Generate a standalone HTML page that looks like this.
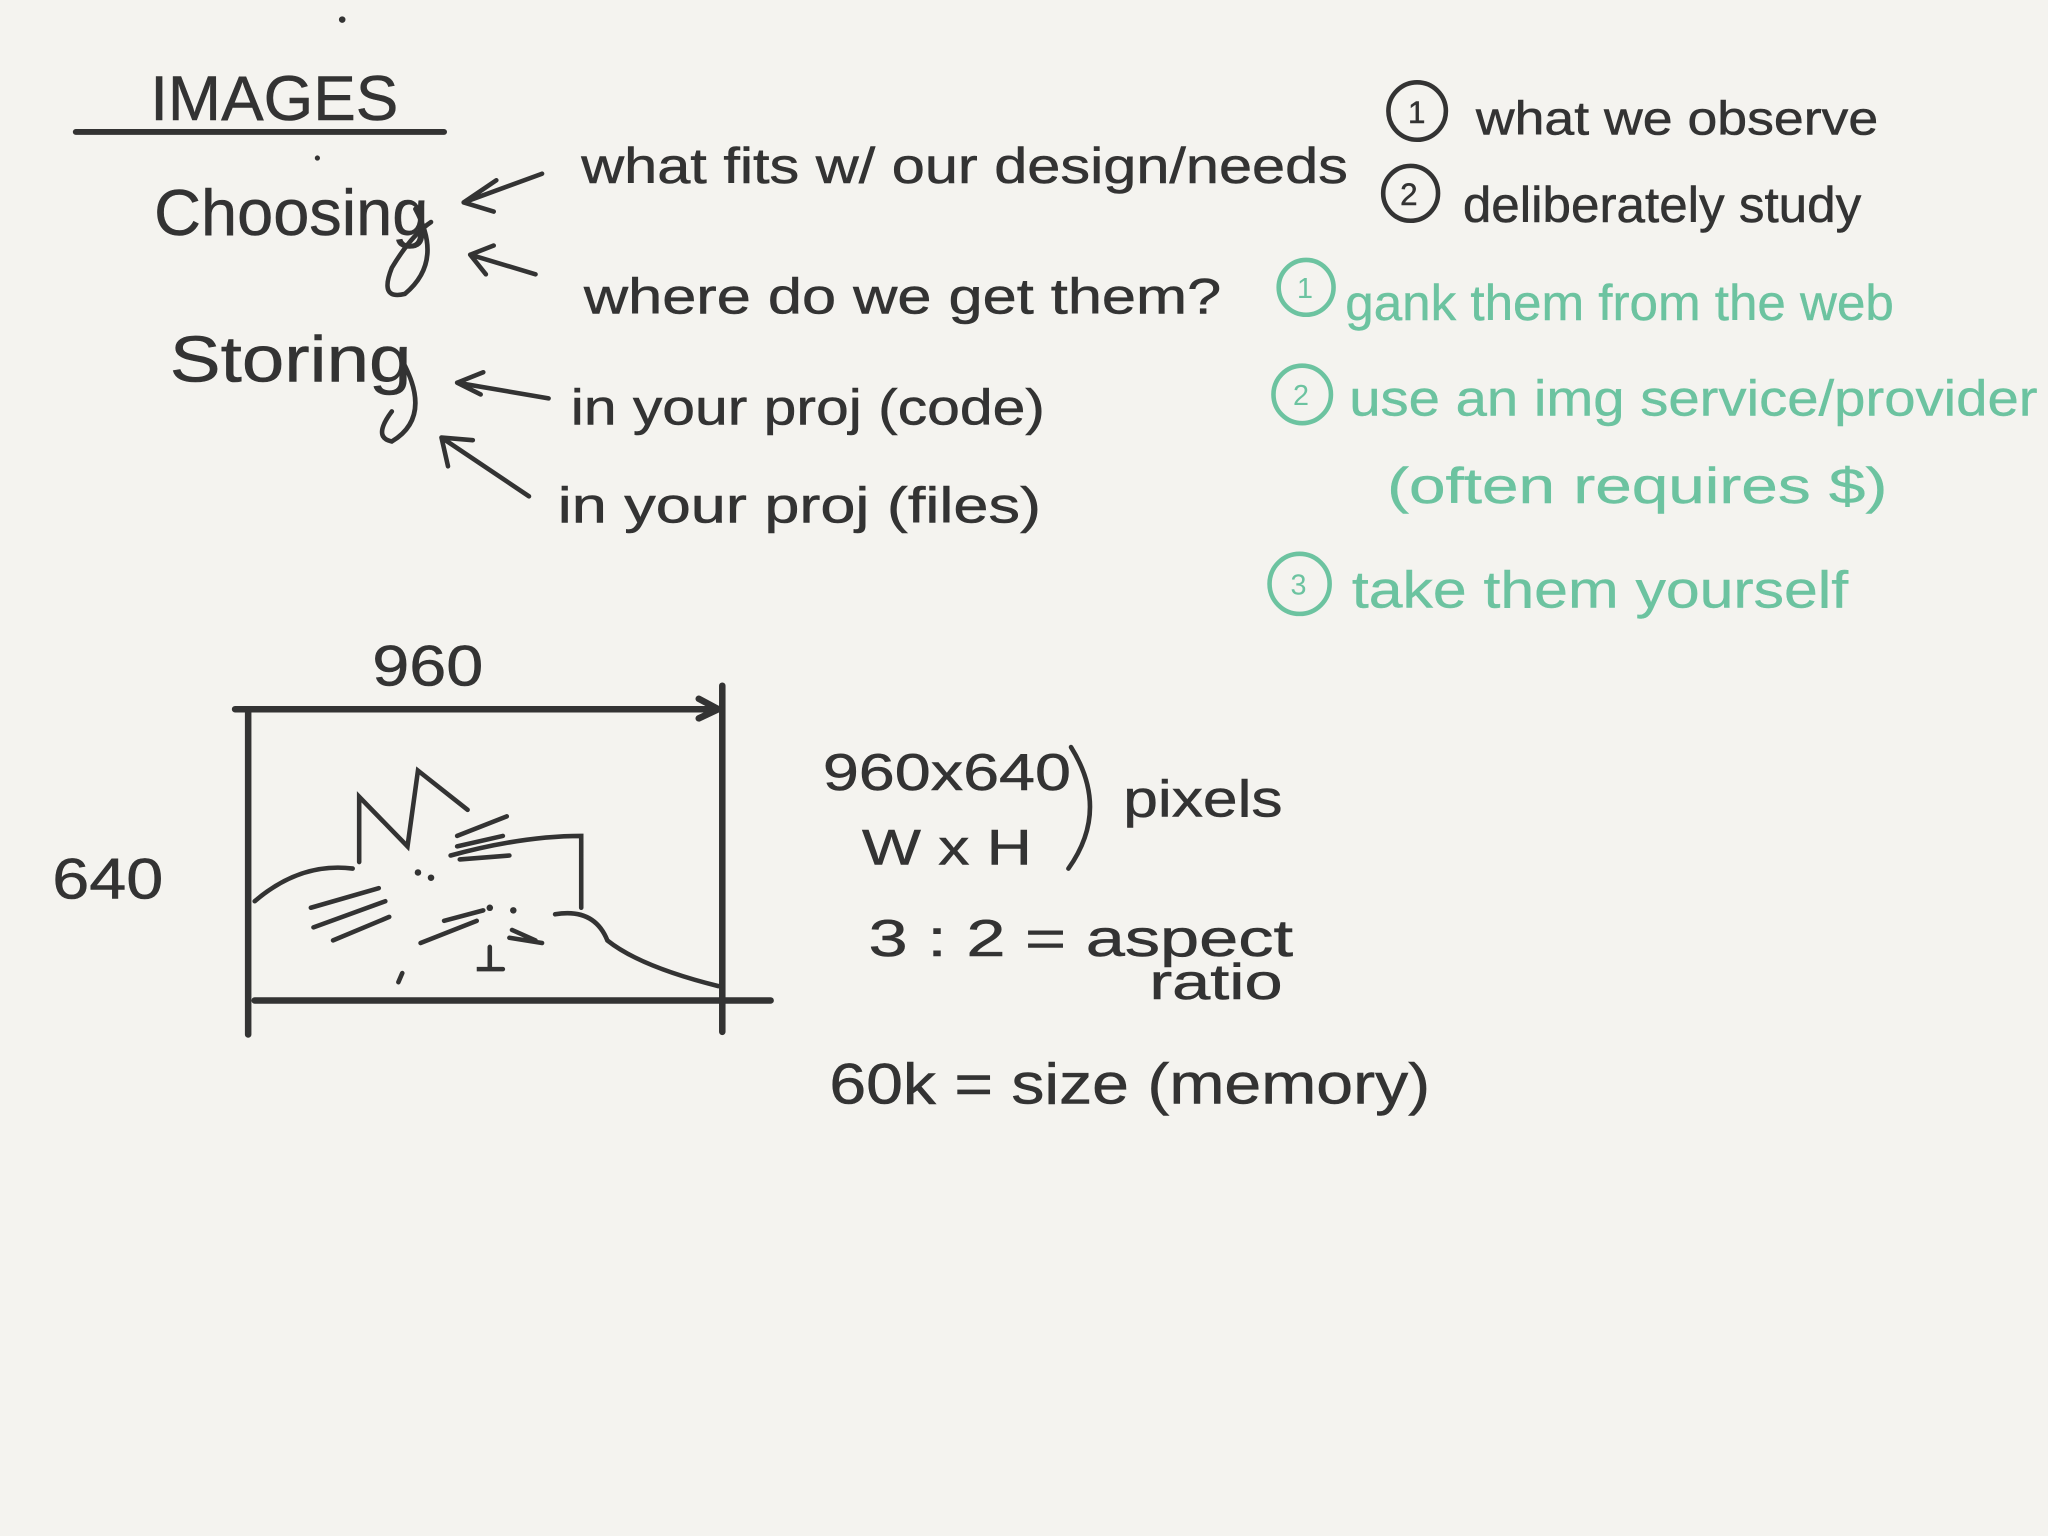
<!DOCTYPE html>
<html><head><meta charset="utf-8"><style>
html,body{margin:0;padding:0;background:#f4f3ef;}
svg{display:block}
text{font-family:"Liberation Sans",sans-serif;}
</style></head><body>
<svg width="2048" height="1536" viewBox="0 0 1568 1176" xmlns="http://www.w3.org/2000/svg">
<rect width="1568" height="1176" fill="#f4f3ef"/>
<g fill="#333" stroke="#333" stroke-width="0.4">
<text x="115" y="92" font-size="48" textLength="190" lengthAdjust="spacingAndGlyphs">IMAGES</text>
<text x="118" y="180" font-size="50" textLength="210" lengthAdjust="spacingAndGlyphs">Choosing</text>
<text x="130" y="292" font-size="50" textLength="185" lengthAdjust="spacingAndGlyphs">Storing</text>
<text x="445" y="140" font-size="38" textLength="587" lengthAdjust="spacingAndGlyphs">what fits w/ our design/needs</text>
<text x="447" y="240" font-size="38" textLength="488" lengthAdjust="spacingAndGlyphs">where do we get them?</text>
<text x="437" y="325" font-size="38" textLength="363" lengthAdjust="spacingAndGlyphs">in your proj (code)</text>
<text x="427" y="400" font-size="38" textLength="370" lengthAdjust="spacingAndGlyphs">in your proj (files)</text>
<text x="1130" y="103" font-size="36" textLength="308" lengthAdjust="spacingAndGlyphs">what we observe</text>
<text x="1120" y="170" font-size="38" textLength="305" lengthAdjust="spacingAndGlyphs">deliberately study</text>
<text x="285" y="525" font-size="44" textLength="85" lengthAdjust="spacingAndGlyphs">960</text>
<text x="40" y="688" font-size="44" textLength="85" lengthAdjust="spacingAndGlyphs">640</text>
<text x="630" y="605" font-size="40" textLength="190" lengthAdjust="spacingAndGlyphs">960x640</text>
<text x="660" y="662" font-size="38" textLength="130" lengthAdjust="spacingAndGlyphs">W x H</text>
<text x="860" y="625" font-size="40" textLength="122" lengthAdjust="spacingAndGlyphs">pixels</text>
<text x="665" y="732" font-size="40" textLength="325" lengthAdjust="spacingAndGlyphs">3 : 2 = aspect</text>
<text x="880" y="765" font-size="38" textLength="102" lengthAdjust="spacingAndGlyphs">ratio</text>
<text x="635" y="845" font-size="44" textLength="460" lengthAdjust="spacingAndGlyphs">60k = size (memory)</text>
<text x="1078" y="94" font-size="24">1</text>
<text x="1072" y="157" font-size="24">2</text>
</g>
<g fill="#6cc3a0" stroke="#6cc3a0" stroke-width="0.3">
<text x="1030" y="245" font-size="38" textLength="420" lengthAdjust="spacingAndGlyphs">gank them from the web</text>
<text x="1033" y="318" font-size="38" textLength="527" lengthAdjust="spacingAndGlyphs">use an img service/provider</text>
<text x="1062" y="385" font-size="38" textLength="383" lengthAdjust="spacingAndGlyphs">(often requires $)</text>
<text x="1035" y="465" font-size="40" textLength="380" lengthAdjust="spacingAndGlyphs">take them yourself</text>
</g>
<g fill="none" stroke="#6cc3a0" stroke-width="3.5">
<circle cx="1000" cy="220" r="21"/><circle cx="997" cy="302" r="22"/><circle cx="995" cy="447" r="23"/>
</g>
<g fill="#6cc3a0" font-size="22"><text x="993" y="228">1</text><text x="990" y="310">2</text><text x="988" y="455">3</text></g>
<g fill="none" stroke="#333" stroke-width="3.5" stroke-linecap="round">
<line x1="58" y1="101" x2="340" y2="101" stroke-width="4.5"/>
<circle cx="1085" cy="85" r="22"/><circle cx="1080" cy="148" r="21"/>
<path d="M415 133 L355 155 M355 155 L380 138 M355 155 L378 162"/>
<path d="M410 210 L360 195 M360 195 L378 188 M360 195 L372 210"/>
<path d="M420 305 L350 293 M350 293 L370 285 M350 293 L368 302"/>
<path d="M405 380 L338 335 M338 335 L343 357 M338 335 L362 337"/>
<path d="M318 160 Q340 200 310 225 Q290 230 300 205 Q315 180 330 170"/>
<path d="M310 280 Q330 320 300 338 Q285 335 300 315"/>
<path d="M820 572 Q850 620 818 665"/>
<path d="M180 543 L550 543 M550 543 L535 535 M550 543 L535 550" stroke-width="5"/>
<path d="M190 545 L190 792 M553 525 L553 790 M195 766 L590 766" stroke-width="5"/>
<path d="M195 690 Q230 660 270 665 M275 660 L275 610 L312 648 L320 590 L358 620 M345 655 Q400 640 445 640 L445 695 M238 695 L290 680 M240 710 L295 690 M255 720 L298 702 M350 640 L388 625 M350 648 L385 640 M352 658 L390 655 M340 705 L370 697 M322 722 L365 705 M392 712 L410 720 M390 718 L415 722 M375 725 L375 742 L365 742 L385 742 M425 700 Q455 695 465 720 Q490 740 550 755 M305 752 L308 745"/>
</g>
<g fill="#333"><circle cx="320" cy="668" r="2.5"/><circle cx="330" cy="672" r="2.5"/><circle cx="375" cy="695" r="2.5"/><circle cx="393" cy="697" r="2.5"/><circle cx="262" cy="15" r="2.5"/><circle cx="243" cy="121" r="2"/></g>
</svg>
</body></html>
